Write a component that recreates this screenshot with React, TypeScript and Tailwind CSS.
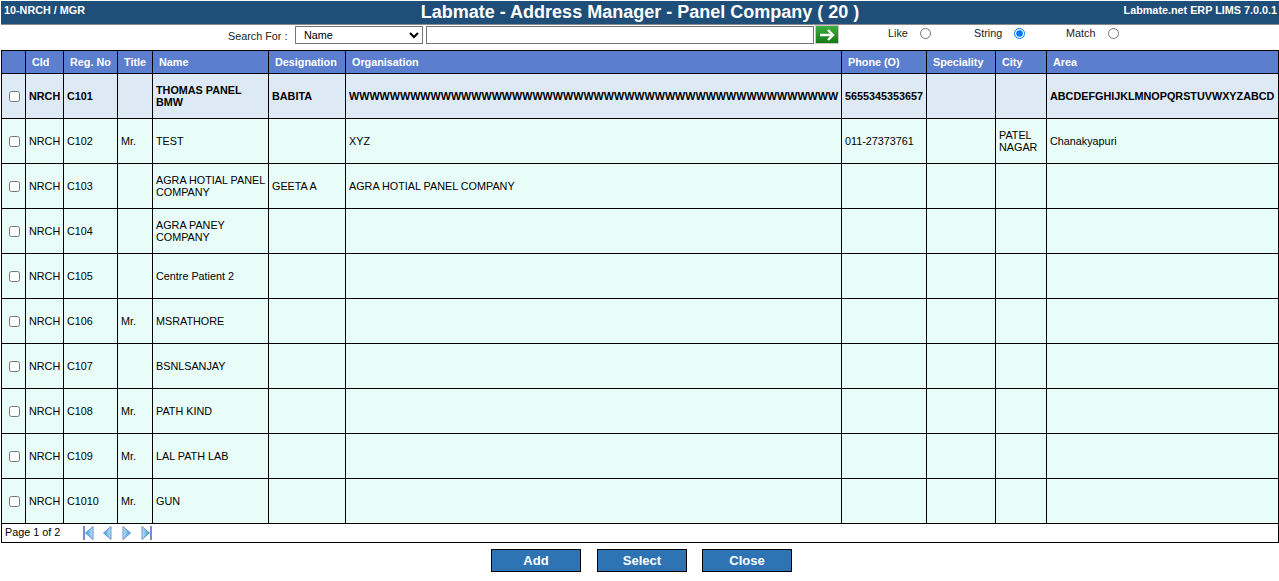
/**
 * Address Manager Page
 * Panel company list with search and paging
 */

const rows = [
  { cid: 'NRCH', reg: 'C101', title: '', name: 'THOMAS PANEL BMW', designation: 'BABITA', org: 'WWWWWWWWWWWWWWWWWWWWWWWWWWWWWWWWWWWWWWWWWWWWWWWW', phone: '5655345353657', city: '', area: 'ABCDEFGHIJKLMNOPQRSTUVWXYZABCD' },
  { cid: 'NRCH', reg: 'C102', title: 'Mr.', name: 'TEST', designation: '', org: 'XYZ', phone: '011-27373761', city: 'PATEL NAGAR', area: 'Chanakyapuri' },
  { cid: 'NRCH', reg: 'C103', title: '', name: 'AGRA HOTIAL PANEL COMPANY', designation: 'GEETA A', org: 'AGRA HOTIAL PANEL COMPANY', phone: '', city: '', area: '' },
  { cid: 'NRCH', reg: 'C104', title: '', name: 'AGRA PANEY COMPANY', designation: '', org: '', phone: '', city: '', area: '' },
  { cid: 'NRCH', reg: 'C105', title: '', name: 'Centre Patient 2', designation: '', org: '', phone: '', city: '', area: '' },
  { cid: 'NRCH', reg: 'C106', title: 'Mr.', name: 'MSRATHORE', designation: '', org: '', phone: '', city: '', area: '' },
  { cid: 'NRCH', reg: 'C107', title: '', name: 'BSNLSANJAY', designation: '', org: '', phone: '', city: '', area: '' },
  { cid: 'NRCH', reg: 'C108', title: 'Mr.', name: 'PATH KIND', designation: '', org: '', phone: '', city: '', area: '' },
  { cid: 'NRCH', reg: 'C109', title: 'Mr.', name: 'LAL PATH LAB', designation: '', org: '', phone: '', city: '', area: '' },
  { cid: 'NRCH', reg: 'C1010', title: 'Mr.', name: 'GUN', designation: '', org: '', phone: '', city: '', area: '' },
];

const headers = [
  { label: '', width: 'w-[24px]' },
  { label: 'CId', width: 'w-[38px]' },
  { label: 'Reg. No', width: 'w-[54px]' },
  { label: 'Title', width: 'w-[35px]' },
  { label: 'Name', width: 'w-[116px]' },
  { label: 'Designation', width: 'w-[77px]' },
  { label: 'Organisation', width: 'w-[496px]' },
  { label: 'Phone (O)', width: 'w-[85px]' },
  { label: 'Speciality', width: 'w-[69px]' },
  { label: 'City', width: 'w-[51px]' },
  { label: 'Area', width: 'w-[232px]' },
];

function PagerIcon({ flip, bar, className = '' }: { flip?: boolean; bar?: boolean; className?: string }) {
  return (
    <svg width="11" height="16" viewBox="0 0 11 16" className={`${flip ? '-scale-x-100' : ''} ${className}`}>
      <defs>
        <linearGradient id="pagerFill" x1="0" y1="0" x2="1" y2="0">
          <stop offset="0" stopColor="#2f9bd8" />
          <stop offset="1" stopColor="#bfe3f5" />
        </linearGradient>
      </defs>
      {bar && <rect x="0" y="1" width="2" height="14" fill="#6f8fd0" />}
      <path d="M10 1.5 L2.5 8 L10 14.5 Z" fill="url(#pagerFill)" stroke="#6f8fd0" strokeWidth="1" />
    </svg>
  );
}

export default function App() {
  return (
    <div className="h-[581px] w-[1279px] overflow-hidden bg-white pt-px pl-px font-['Liberation_Sans',Arial,sans-serif] text-[10.8px] text-black">
      <div className="relative h-[24px] w-[1278px] border-b border-[#8a8a8a] bg-[#1f4e79] text-white">
        <span className="absolute top-[1px] left-[3px] font-bold">10-NRCH / MGR</span>
        <h1 className="text-center text-[18px] leading-[23px] font-bold">Labmate - Address Manager - Panel Company ( 20 )</h1>
        <span className="absolute top-[1px] right-[2px] font-bold">Labmate.net ERP LIMS 7.0.0.1</span>
      </div>

      <div className="flex h-[25px] items-start">
        <span className="mt-[3px] ml-[227px] w-[67px] text-[#222]">Search For :</span>
        <select className="mt-[1px] h-[18px] w-[128px] rounded-none border border-[#767676] bg-white pl-[4px]" defaultValue="Name">
          <option>Name</option>
        </select>
        <input type="text" className="mt-[1px] ml-[3px] h-[18px] w-[388px] border border-[#767676] bg-white" />
        <button className="ml-[1px] flex h-[19px] w-[24px] items-center justify-center border border-[#c8c8c8] bg-gradient-to-b from-[#3fae3f] to-[#0f7a14]">
          <svg width="18" height="14" viewBox="0 0 18 14" fill="none" stroke="#ffffff" strokeWidth="2.4">
            <path d="M2 7 H15 M10 2 L15 7 L10 12" />
          </svg>
        </button>
        <div className="flex items-center text-[#222]">
          <span className="ml-[49px] w-[32px]">Like</span>
          <input type="radio" name="mode" className="m-0 h-[11px] w-[11px]" />
          <span className="ml-[43px] w-[40px]">String</span>
          <input type="radio" name="mode" defaultChecked className="m-0 h-[11px] w-[11px]" />
          <span className="ml-[41px] w-[42px]">Match</span>
          <input type="radio" name="mode" className="m-0 h-[11px] w-[11px]" />
        </div>
      </div>

      <table className="w-[1278px] table-fixed border-collapse">
        <thead>
          <tr className="h-[23px] bg-[#5b7fce] text-white">
            {headers.map((h, i) => (
              <th key={i} className={`${h.width} border border-black pl-[6px] text-left font-bold`}>
                {h.label}
              </th>
            ))}
          </tr>
        </thead>
        <tbody>
          {rows.map((row, i) => (
            <tr key={row.reg} className={`h-[45px] ${i === 0 ? 'bg-[#dee9f6] font-bold' : 'bg-[#e8fdf8]'}`}>
              <td className="border border-black pl-[2px]">
                <input type="checkbox" className="mx-auto block h-[11px] w-[11px]" />
              </td>
              <td className="border border-black px-[3px]">{row.cid}</td>
              <td className="border border-black px-[3px]">{row.reg}</td>
              <td className="border border-black px-[3px]">{row.title}</td>
              <td className="border border-black pl-[3px] leading-[12px]">{row.name}</td>
              <td className="border border-black px-[3px]">{row.designation}</td>
              <td className="border border-black px-[3px]">{row.org}</td>
              <td className="border border-black px-[3px]">{row.phone}</td>
              <td className="border border-black px-[3px]"></td>
              <td className="border border-black px-[3px] leading-[12px]">{row.city}</td>
              <td className="border border-black px-[3px] whitespace-nowrap">{row.area}</td>
            </tr>
          ))}
          <tr className="h-[19px] bg-white">
            <td colSpan={11} className="border border-black px-[3px] py-0">
              <div className="flex items-center">
                <span className="w-[78px] pb-[2px]">Page 1 of 2</span>
                <PagerIcon bar />
                <PagerIcon className="ml-[7px]" />
                <PagerIcon flip className="ml-[10px]" />
                <PagerIcon flip bar className="ml-[8px]" />
              </div>
            </td>
          </tr>
        </tbody>
      </table>

      <div className="mt-[6px] ml-[490px] flex">
        <button className="h-[23px] w-[90px] border border-black bg-[#2e74b5] text-[13px] font-bold text-white">Add</button>
        <button className="ml-[16px] h-[23px] w-[90px] border border-black bg-[#2e74b5] text-[13px] font-bold text-white">Select</button>
        <button className="ml-[15px] h-[23px] w-[90px] border border-black bg-[#2e74b5] text-[13px] font-bold text-white">Close</button>
      </div>
    </div>
  );
}
